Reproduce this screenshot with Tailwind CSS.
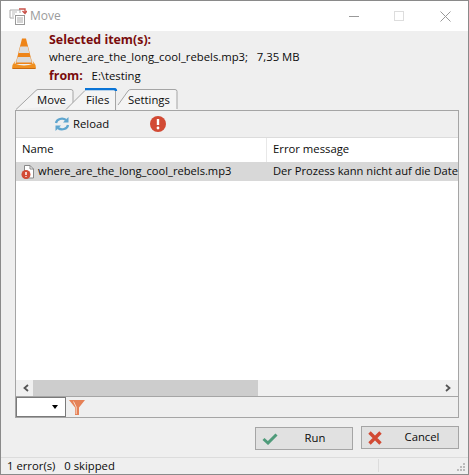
<!DOCTYPE html>
<html><head><meta charset="utf-8"><script src="https://cdn.jsdelivr.net/npm/@tailwindcss/browser@4"></script></head>
<body class="bg-[#8a8a8a] font-['Open_Sans','Noto_Sans',sans-serif] text-[11.3px] leading-[16px] text-[#0b0b0b] overflow-hidden">
<div class="h-[475px] w-[469px] pt-px pr-px pb-px pl-px">
<div class="w-[467px] h-[473px] bg-[#efefef] flex flex-col">
  <div class="h-[30px] bg-white flex items-center shrink-0">
    <svg class="ml-[8px] w-[18px] h-[18px]" viewBox="0 0 18 18" fill="none">
      <path d="M1 3h10v3M1 3v8h4" stroke="#aaa"/><path d="M3 5h5M3 7h3M3 9h2" stroke="#bbb"/><rect x="6.5" y="8.5" width="9" height="9" fill="#fff" stroke="#999"/><path d="M8 11h6M8 13h6M8 15h6" stroke="#aaa"/><path d="M10 2h6v4M13.5 4l2.5 2.5L18 4" stroke="#c9524a" stroke-width="1.4"/>
    </svg>
    <span class="ml-[3px] text-[#9b9b9b] text-[12px]">Move</span>
    <svg class="ml-auto mr-[35px] w-[10px] h-[10px]" viewBox="0 0 10 10"><path d="M0 5.5h10" stroke="#999"/></svg>
    <svg class="mr-[36px] w-[10px] h-[10px]" viewBox="0 0 10 10"><rect x=".5" y=".5" width="9" height="9" fill="none" stroke="#ddd"/></svg>
    <svg class="mr-[17px] w-[11px] h-[11px]" viewBox="0 0 11 11"><path d="M.5.5l10 10M10.5.5l-10 10" stroke="#999"/></svg>
  </div>
  <div class="flex h-[57px] shrink-0">
    <svg class="ml-[11px] mt-[7px] w-[24px] h-[31px]" viewBox="0 0 24 31">
      <path d="M10 0.500h4l6.500 25.500h-17z" fill="#ee8418"/>
      <path d="M8.300 8.500h7.400l1.600 6.500H6.700z" fill="#dcdcdc"/>
      <path d="M5.700 19h12.600l1.500 5.500H4.200z" fill="#d9d9d9"/>
      <path d="M3.500 22.500L.5 27 0 30.500h24L23.500 27l-3-4.500 1 3c-6 2.500-13 2.500-19 0z" fill="#f09020"/>
      <path d="M.5 30.500h23" stroke="#c86a10"/>
    </svg>
    <div class="ml-[13px]">
      <div class="mt-[1px] h-[16px] font-bold text-[#7a0c0c] text-[12.4px]">Selected item(s):</div>
      <div class="mt-[1px] h-[18px] whitespace-pre">where_are_the_long_cool_rebels.mp3;   7,35 MB</div>
      <div class="mt-[1px] h-[18px] whitespace-pre"><span class="font-bold text-[#7a0c0c] text-[12.4px]">from:</span>   E:\testing</div>
    </div>
  </div>
  <div class="relative h-[22px] shrink-0 ml-[14px]">
    <svg class="absolute left-0 top-0 w-[170px] h-[23px]" viewBox="0 0 170 23" fill="none">
      <path d="M1 21.5L21 2.5q1-1 2-1H56q2 0 2 2V16" fill="#f4f4f4" stroke="#a5a5a5"/>
      <path d="M103 17L113 3q1-1.500 3-1.500H160q2 0 2 2V22H102z" fill="#f4f4f4"/><path d="M103 17L113 3q1-1.500 3-1.500H160q2 0 2 2V21" stroke="#a5a5a5"/>
      <path d="M51 21.500L70 2.500H100.500V22" fill="#f4f4f4"/><path d="M51 21.500L70 2.500M100.500 2V22" stroke="#a5a5a5"/>
      <path d="M70 1h29q2 0 2 2" stroke="#0a74d6" stroke-width="2.400"/>
    </svg>
    <span class="absolute left-[22px] top-[4px]">Move</span>
    <span class="absolute left-[71px] top-[4px]">Files</span>
    <span class="absolute left-[113px] top-[4px]">Settings</span>
  </div>
  <div class="mx-[14px] w-[444px] h-[308px] border border-[#a5a5a5] flex flex-col shrink-0">
    <div class="h-[27px] flex items-center shrink-0 border-b border-[#dcdcdc]">
      <svg class="ml-[38px] w-[16px] h-[16px]" viewBox="0 0 16 16" fill="none" stroke="#5fa6cf" stroke-width="2.300">
        <path d="M2 7a6 5 0 0 1 10-3"/><path d="M14 9a6 5 0 0 1-10 3"/>
        <path d="M14.500 1v5.500H9z" fill="#5fa6cf" stroke="none"/><path d="M1.500 15V9.500H7z" fill="#5fa6cf" stroke="none"/>
      </svg>
      <span class="ml-[3px] w-[33px]">Reload</span>
      <svg class="ml-[44px] w-[16px] h-[16px]" viewBox="0 0 16 16"><circle cx="8" cy="8" r="8" fill="#d24a34"/><path d="M8 3v6" stroke="#fff" stroke-width="2.400"/><circle cx="8" cy="12" r="1.400" fill="#fff"/></svg>
    </div>
    <div class="h-[24px] bg-white flex items-center shrink-0">
      <span class="ml-[6px] w-[244px] pb-[2px]">Name</span>
      <span class="border-l border-[#e8e8e8] h-full pl-[6px] pb-[2px] flex items-center">Error message</span>
    </div>
    <div class="h-[19px] bg-[#d8d8d8] flex items-center shrink-0 whitespace-nowrap overflow-hidden">
      <svg class="ml-[5px] w-[14px] h-[15px] shrink-0" viewBox="0 0 14 15" fill="none">
        <path d="M3.500 1.500H9L12.500 5V14H3.500z" fill="#fff" stroke="#888"/><path d="M9 1.500V5h3.500" stroke="#888"/>
        <circle cx="5" cy="10.500" r="4.500" fill="#d24a34"/><path d="M5 8v3" stroke="#fff" stroke-width="1.500"/><path d="M5 12v1" stroke="#fff" stroke-width="1.200"/>
      </svg>
      <span class="ml-[3px] w-[235px] shrink-0 pb-[2px] text-[11.15px]">where_are_the_long_cool_rebels.mp3</span>
      <span class="pb-[2px] text-[11.15px]">Der Prozess kann nicht auf die Date</span>
    </div>
    <div class="flex-1 bg-white"></div>
    <div class="h-[16px] bg-[#f0f0f0] flex items-center shrink-0">
      <svg class="ml-[6px] w-[8px] h-[8px]" viewBox="0 0 8 8" fill="none"><path d="M6 1L2.500 4 6 7" stroke="#555" stroke-width="1.800"/></svg>
      <div class="ml-[3px] w-[225px] h-full bg-[#cdcdcd]"></div>
      <svg class="ml-auto mr-[6px] w-[8px] h-[8px]" viewBox="0 0 8 8" fill="none"><path d="M2 1l3.500 3L2 7" stroke="#555" stroke-width="1.800"/></svg>
    </div>
    <div class="h-[21px] border-t border-[#a5a5a5] flex items-center shrink-0">
      <div class="w-[50px] h-[20px] bg-white border border-[#7a7a7a] flex items-center justify-end pr-[7px]"><span class="w-0 h-0 border-x-[3.500px] border-x-transparent border-t-[4px] border-t-black"></span></div>
      <svg class="ml-[3px] w-[16px] h-[16px]" viewBox="0 0 16 16"><path d="M0 1h16L10 8.500V16H6V8.500z" fill="#e58157"/><path d="M4.500 2.500L7.200 8v7" stroke="#f8d7c5" fill="none"/></svg>
    </div>
  </div>
  <div class="ml-[254px] mt-[8px] flex h-[25px] shrink-0">
    <div class="w-[98px] h-[23px] mt-px border border-[#a5a5a5] bg-[#e1e1e1] relative flex items-center justify-center pl-[22px] pb-[2px]">
      <svg class="absolute left-[6px] top-[5px] w-[16px] h-[12px]" viewBox="0 0 16 12" fill="none"><path d="M1.500 6l4.500 4L14.500 1.500" stroke="#4f9b7a" stroke-width="3"/></svg>Run</div>
    <div class="ml-[8px] w-[98px] h-[23px] border border-[#a5a5a5] bg-[#e1e1e1] relative flex items-center justify-center pl-[24px] pb-[2px]">
      <svg class="absolute left-[6px] top-[4px] w-[14px] h-[14px]" viewBox="0 0 14 14" fill="none"><path d="M1.500 1.500l11 11M12.500 1.500l-11 11" stroke="#d24a34" stroke-width="3.400"/></svg>Cancel</div>
  </div>
  <div class="mt-[6px] border-t border-[#dcdcdc] flex-1 flex items-center relative">
    <span class="ml-[6px] whitespace-pre">1 error(s)   0 skipped</span>
    <div class="absolute left-[377px] top-[1px] bottom-[2px] border-l border-[#dcdcdc]"></div>
    <svg class="absolute right-[2px] bottom-[2px] w-[10px] h-[10px]" viewBox="0 0 10 10" fill="#bbb"><rect x="7" y="1" width="2" height="2"/><rect x="4" y="4" width="2" height="2"/><rect x="7" y="4" width="2" height="2"/><rect x="1" y="7" width="2" height="2"/><rect x="4" y="7" width="2" height="2"/><rect x="7" y="7" width="2" height="2"/></svg>
  </div>
</div>
</div>
</body></html>
